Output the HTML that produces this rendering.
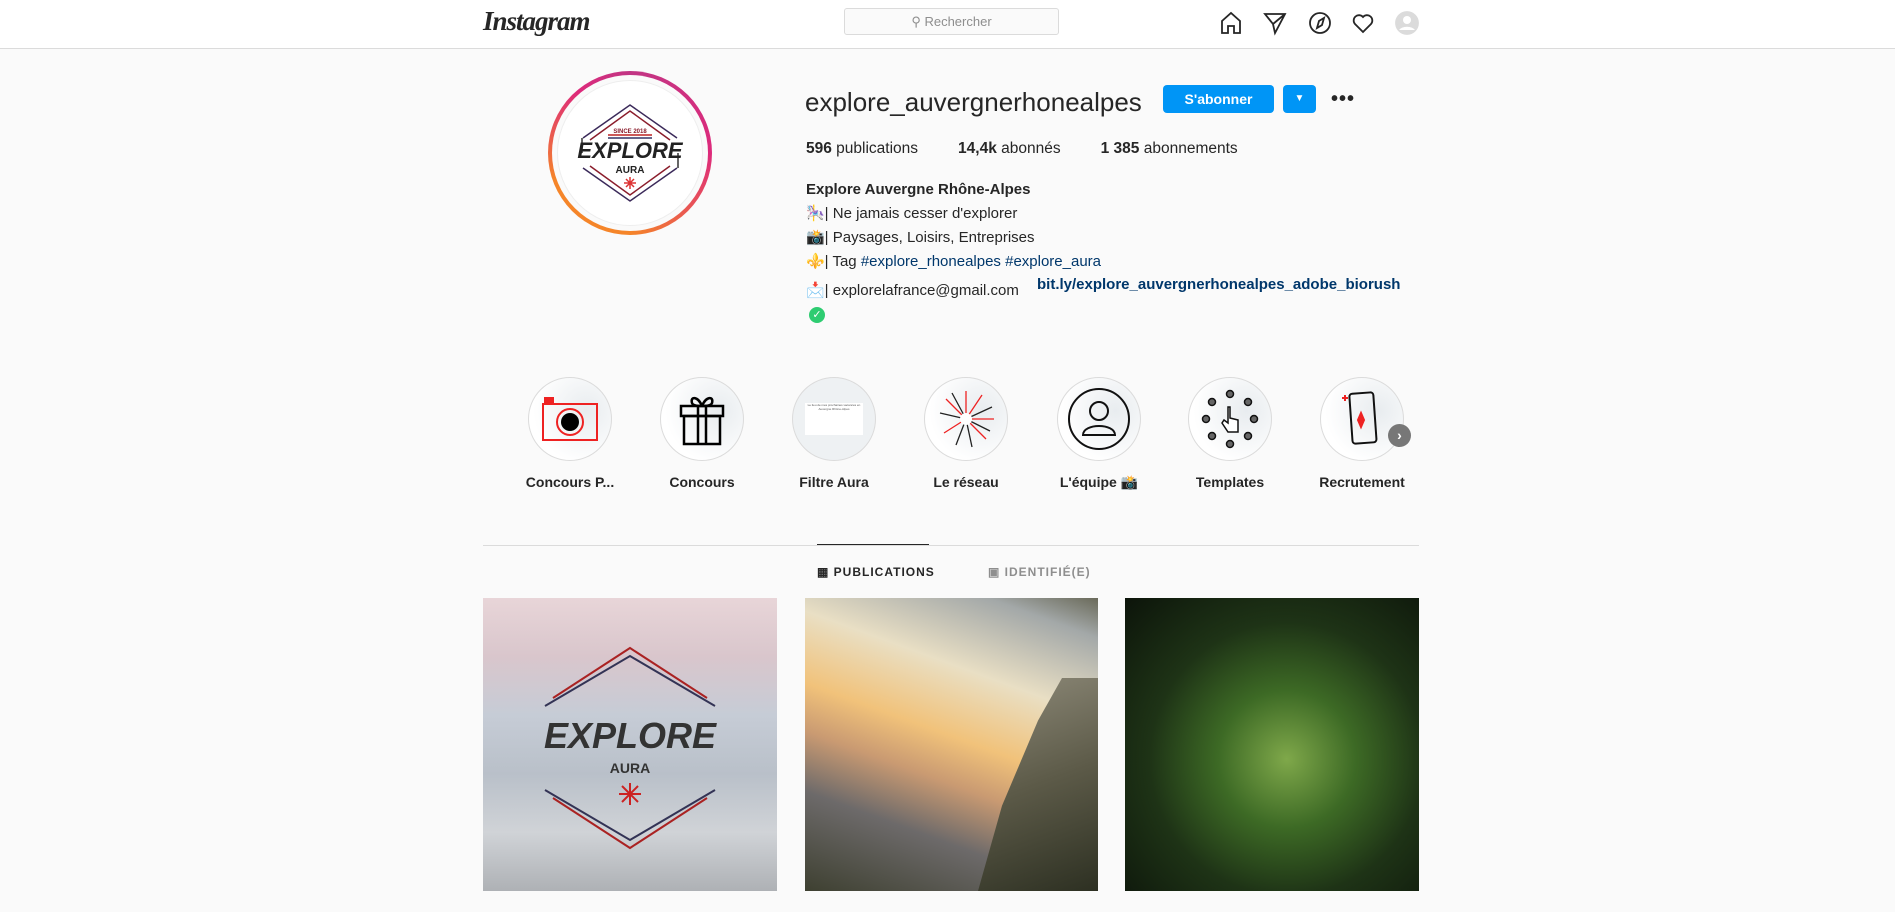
<!DOCTYPE html>
<html><head><meta charset="utf-8"><style>
*{box-sizing:border-box;margin:0;padding:0}
body{width:1895px;height:912px;overflow:hidden;background:#fafafa;font-family:"Liberation Sans",sans-serif;color:#262626;position:relative}
.a{position:absolute}
.hdr{left:0;top:0;width:1895px;height:49px;background:#fff;border-bottom:1px solid #dbdbdb}
.hl{width:84px;height:84px;border-radius:50%;border:1px solid #dbdbdb;background:radial-gradient(circle at 70% 40%,#e8ecef,#fff 70%);display:flex;align-items:center;justify-content:center;overflow:hidden}
.lbl{font-size:14px;font-weight:bold;color:#262626;width:120px;text-align:center}
.bio{left:806px;font-size:15px;white-space:nowrap}
.lnk{color:#00376b}
</style></head><body>
<div class="a hdr"></div>
<div class="a" style="left:483px;top:6px;font-family:'Liberation Serif',serif;font-style:italic;font-weight:bold;font-size:27px;letter-spacing:-1px;color:#262626">Instagram</div>
<div class="a" style="left:844px;top:8px;width:215px;height:27px;border:1px solid #dbdbdb;border-radius:3px;background:#fafafa;font-size:13px;color:#8e8e8e;text-align:center;line-height:25px">&#9906; Rechercher</div>
<svg class="a" style="left:1219px;top:10px" width="200" height="26" viewBox="0 0 200 26" fill="none" stroke="#262626" stroke-width="1.8">
<path d="M3 23V11L12 3l9 8v12h-6v-7h-6v7z"/>
<path d="M46 4l20 0-10 19-2-9z M54 14l12-10"/>
<circle cx="101" cy="13" r="10"/><path d="M105 8l-2 7-5 3 2-7z"/>
<path d="M144 22l-8-8a5 5 0 0 1 8-7 5 5 0 0 1 8 7z"/>
<circle cx="188" cy="13" r="11" fill="#dbdbdb" stroke="#dbdbdb"/><circle cx="188" cy="10" r="4" fill="#fff" stroke="none"/><path d="M180 20a9 6 0 0 1 16 0" fill="#fff" stroke="none"/>
</svg>
<!-- avatar -->
<div class="a" style="left:548px;top:71px;width:164px;height:164px;border-radius:50%;background:conic-gradient(#c13584 0deg,#dd2a7b 90deg,#f58529 180deg,#f58529 250deg,#dd2a7b 320deg,#c13584 360deg)"></div>
<div class="a" style="left:552px;top:75px;width:156px;height:156px;border-radius:50%;background:#fafafa"></div>
<div class="a" style="left:557px;top:80px;width:146px;height:146px;border-radius:50%;background:#fff;border:1px solid #eee"></div>
<svg class="a" style="left:570px;top:93px" width="120" height="120" viewBox="0 0 120 120" fill="none" stroke-width="1.5">
<path d="M13 45L60 12 107 45" stroke="#3b2a5a"/><path d="M20 47L60 18 100 47" stroke="#8b1d2c"/>
<path d="M13 75L60 108 107 75" stroke="#3b2a5a"/><path d="M20 73L60 102 100 73" stroke="#8b1d2c"/>
<path d="M12 45v15M108 60v15" stroke="#333"/>
<path d="M38 42h44" stroke="#b22" /><path d="M38 45h44" stroke="#336"/>
<text x="60" y="40" font-size="6" fill="#8b1d2c" text-anchor="middle" font-family="Liberation Sans" stroke="none" font-weight="bold">SINCE 2018</text>
<text x="60" y="65" font-size="22" fill="#222" text-anchor="middle" font-family="Liberation Sans" stroke="none" font-weight="bold" font-style="italic">EXPLORE</text>
<text x="60" y="80" font-size="10" fill="#222" text-anchor="middle" font-family="Liberation Sans" stroke="none" font-weight="bold">AURA</text>
<path d="M60 84v12M54 90h12M56 86l8 8M64 86l-8 8" stroke="#d33"/>
</svg>
<div class="a" style="left:805px;top:87px;font-size:26px;font-weight:300;color:#262626">explore_auvergnerhonealpes</div>
<div class="a" style="left:1163px;top:85px;width:111px;height:28px;background:#0095f6;border-radius:4px;color:#fff;font-weight:bold;font-size:14px;text-align:center;line-height:28px">S'abonner</div>
<div class="a" style="left:1283px;top:85px;width:33px;height:28px;background:#0095f6;border-radius:4px;color:#fff;font-size:10px;text-align:center;line-height:28px">&#9660;</div>
<div class="a" style="left:1331px;top:88px;font-size:20px;font-weight:bold;letter-spacing:1px">•••</div>
<div class="a" style="left:806px;top:140px;font-size:15.5px;white-space:nowrap"><b>596</b> publications<span style="display:inline-block;width:40px"></span><b>14,4k</b> abonnés<span style="display:inline-block;width:40px"></span><b>1 385</b> abonnements</div>
<div class="a bio" style="top:181px;font-weight:bold">Explore Auvergne Rhône-Alpes</div>
<div class="a bio" style="top:204px">🎠| Ne jamais cesser d'explorer</div>
<div class="a bio" style="top:228px">📸| Paysages, Loisirs, Entreprises</div>
<div class="a bio" style="top:252px">⚜️| Tag <span class="lnk">#explore_rhonealpes #explore_aura</span></div>
<div class="a bio" style="top:281px">📩| explorelafrance@gmail.com</div>
<div class="a" style="left:1037px;top:276px;font-size:15px;font-weight:bold;color:#00376b">bit.ly/explore_auvergnerhonealpes_adobe_biorush</div>
<div class="a" style="left:809px;top:307px;width:16px;height:16px;border-radius:50%;background:#2ecc71;color:#fff;font-size:11px;text-align:center;line-height:16px">✓</div>
<!-- highlights -->
<div class="a hl" style="left:528px;top:377px"><svg width="60" height="50" viewBox="0 0 60 50" fill="none" stroke="#e22" stroke-width="2"><rect x="5" y="4" width="8" height="6" fill="#e22"/><rect x="3" y="10" width="54" height="36"/><circle cx="30" cy="28" r="13"/><circle cx="30" cy="28" r="9" fill="#000" stroke="none"/></svg></div>
<div class="a hl" style="left:660px;top:377px"><svg width="50" height="54" viewBox="0 0 50 54" fill="none" stroke="#000" stroke-width="2.5"><path d="M25 14c-4-10-12-10-10-3 1 3 6 3 10 3 4 0 9 0 10-3 2-7-6-7-10 3"/><rect x="4" y="14" width="42" height="10"/><rect x="7" y="24" width="36" height="28"/><path d="M21 14v38M29 14v38"/></svg></div>
<div class="a hl" style="left:792px;top:377px;background:#eef1f3"><div style="width:58px;height:32px;background:#fff;font-size:3px;color:#555;text-align:center">Le lieu de mes prochaines vacances en Auvergne Rhône-Alpes</div></div>
<div class="a hl" style="left:924px;top:377px"><svg width="60" height="60" viewBox="0 0 60 60" stroke-width="1.3"><g stroke="#e22"><path d="M30 30L30 2M30 30L58 30M30 30L10 10M30 30L50 50M30 30L8 44M30 30L46 6"/></g><g stroke="#222"><path d="M30 30L16 4M30 30L56 18M30 30L4 24M30 30L36 58M30 30L20 56M30 30L54 42"/></g><circle cx="30" cy="30" r="6" fill="#fff"/></svg></div>
<div class="a hl" style="left:1057px;top:377px"><svg width="64" height="64" viewBox="0 0 64 64" fill="none" stroke="#111" stroke-width="2"><circle cx="32" cy="32" r="30"/><circle cx="32" cy="24" r="9"/><path d="M16 48c0-12 32-12 32 0z"/></svg></div>
<div class="a hl" style="left:1188px;top:377px"><svg width="60" height="60" viewBox="0 0 60 60" fill="#666" stroke="#111" stroke-width="1.5"><circle cx="30" cy="5" r="3.5"/><circle cx="48" cy="13" r="3.5"/><circle cx="54" cy="30" r="3.5"/><circle cx="48" cy="47" r="3.5"/><circle cx="30" cy="55" r="3.5"/><circle cx="12" cy="47" r="3.5"/><circle cx="6" cy="30" r="3.5"/><circle cx="12" cy="13" r="3.5"/><path d="M28 18v16l-4-3-2 3 6 9h10v-12l-8-2v-11z" fill="#fff"/></svg></div>
<div class="a hl" style="left:1320px;top:377px"><svg width="50" height="60" viewBox="0 0 50 60" fill="none" stroke="#111" stroke-width="2"><rect x="14" y="4" width="24" height="50" rx="3" transform="rotate(-4 26 30)"/><path d="M24 24l3 7 -3 7-3-7z" fill="#e22" stroke="#e22"/><path d="M8 6v6M5 9h6" stroke="#e22"/></svg></div>
<div class="a" style="left:1388px;top:424px;width:23px;height:23px;border-radius:50%;background:#777;color:#fff;font-weight:bold;font-size:14px;text-align:center;line-height:23px">›</div>
<div class="a lbl" style="left:510px;top:474px">Concours P...</div>
<div class="a lbl" style="left:642px;top:474px">Concours</div>
<div class="a lbl" style="left:774px;top:474px">Filtre Aura</div>
<div class="a lbl" style="left:906px;top:474px">Le réseau</div>
<div class="a lbl" style="left:1039px;top:474px">L'équipe 📸</div>
<div class="a lbl" style="left:1170px;top:474px">Templates</div>
<div class="a lbl" style="left:1302px;top:474px">Recrutement</div>
<!-- tabs -->
<div class="a" style="left:483px;top:545px;width:936px;height:1px;background:#dbdbdb"></div>
<div class="a" style="left:817px;top:544px;width:112px;height:1px;background:#262626"></div>
<div class="a" style="left:817px;top:565px;font-size:12px;font-weight:bold;letter-spacing:1px;color:#262626">&#9638; PUBLICATIONS</div>
<div class="a" style="left:988px;top:565px;font-size:12px;font-weight:bold;letter-spacing:1px;color:#8e8e8e">&#9635; IDENTIFIÉ(E)</div>
<!-- grid -->
<div class="a" style="left:483px;top:598px;width:294px;height:293px;background:linear-gradient(180deg,#e8d5d8 0%,#d9c6cc 20%,#c6ccd6 40%,#b9c0c9 60%,#d0d3d7 80%,#aeb1b5 100%)">
<svg width="294" height="293" viewBox="0 0 294 293" fill="none" stroke-width="2"><path d="M70 100L147 50 224 100" stroke="#a22"/><path d="M62 108L147 58 232 108" stroke="#335"/><path d="M70 200L147 250 224 200" stroke="#a22"/><path d="M62 192L147 242 232 192" stroke="#335"/><text x="147" y="150" font-size="36" font-weight="bold" font-style="italic" fill="#333" text-anchor="middle" stroke="none">EXPLORE</text><text x="147" y="175" font-size="14" font-weight="bold" fill="#333" text-anchor="middle" stroke="none">AURA</text><path d="M147 185v22M136 196h22M139 188l16 16M155 188l-16 16" stroke="#c22"/></svg></div>
<div class="a" style="left:805px;top:598px;width:293px;height:293px;background:linear-gradient(200deg,#6a6a5a 0%,#a3a8a8 10%,#e9dfc4 30%,#f1c27a 48%,#c99a72 60%,#6d6a6a 75%,#3e4031 100%)"><div style="position:absolute;right:0;top:80px;width:120px;height:213px;background:linear-gradient(160deg,#8f8b7a,#5c5a48 50%,#2d3022);clip-path:polygon(70% 0,100% 0,100% 100%,0 100%,20% 60%,50% 20%)"></div></div>
<div class="a" style="left:1125px;top:598px;width:294px;height:293px;background:radial-gradient(ellipse at 55% 55%,#7fa84a 0%,#3d6a25 30%,#1e3316 60%,#0c140a 100%)"></div>
</body></html>
